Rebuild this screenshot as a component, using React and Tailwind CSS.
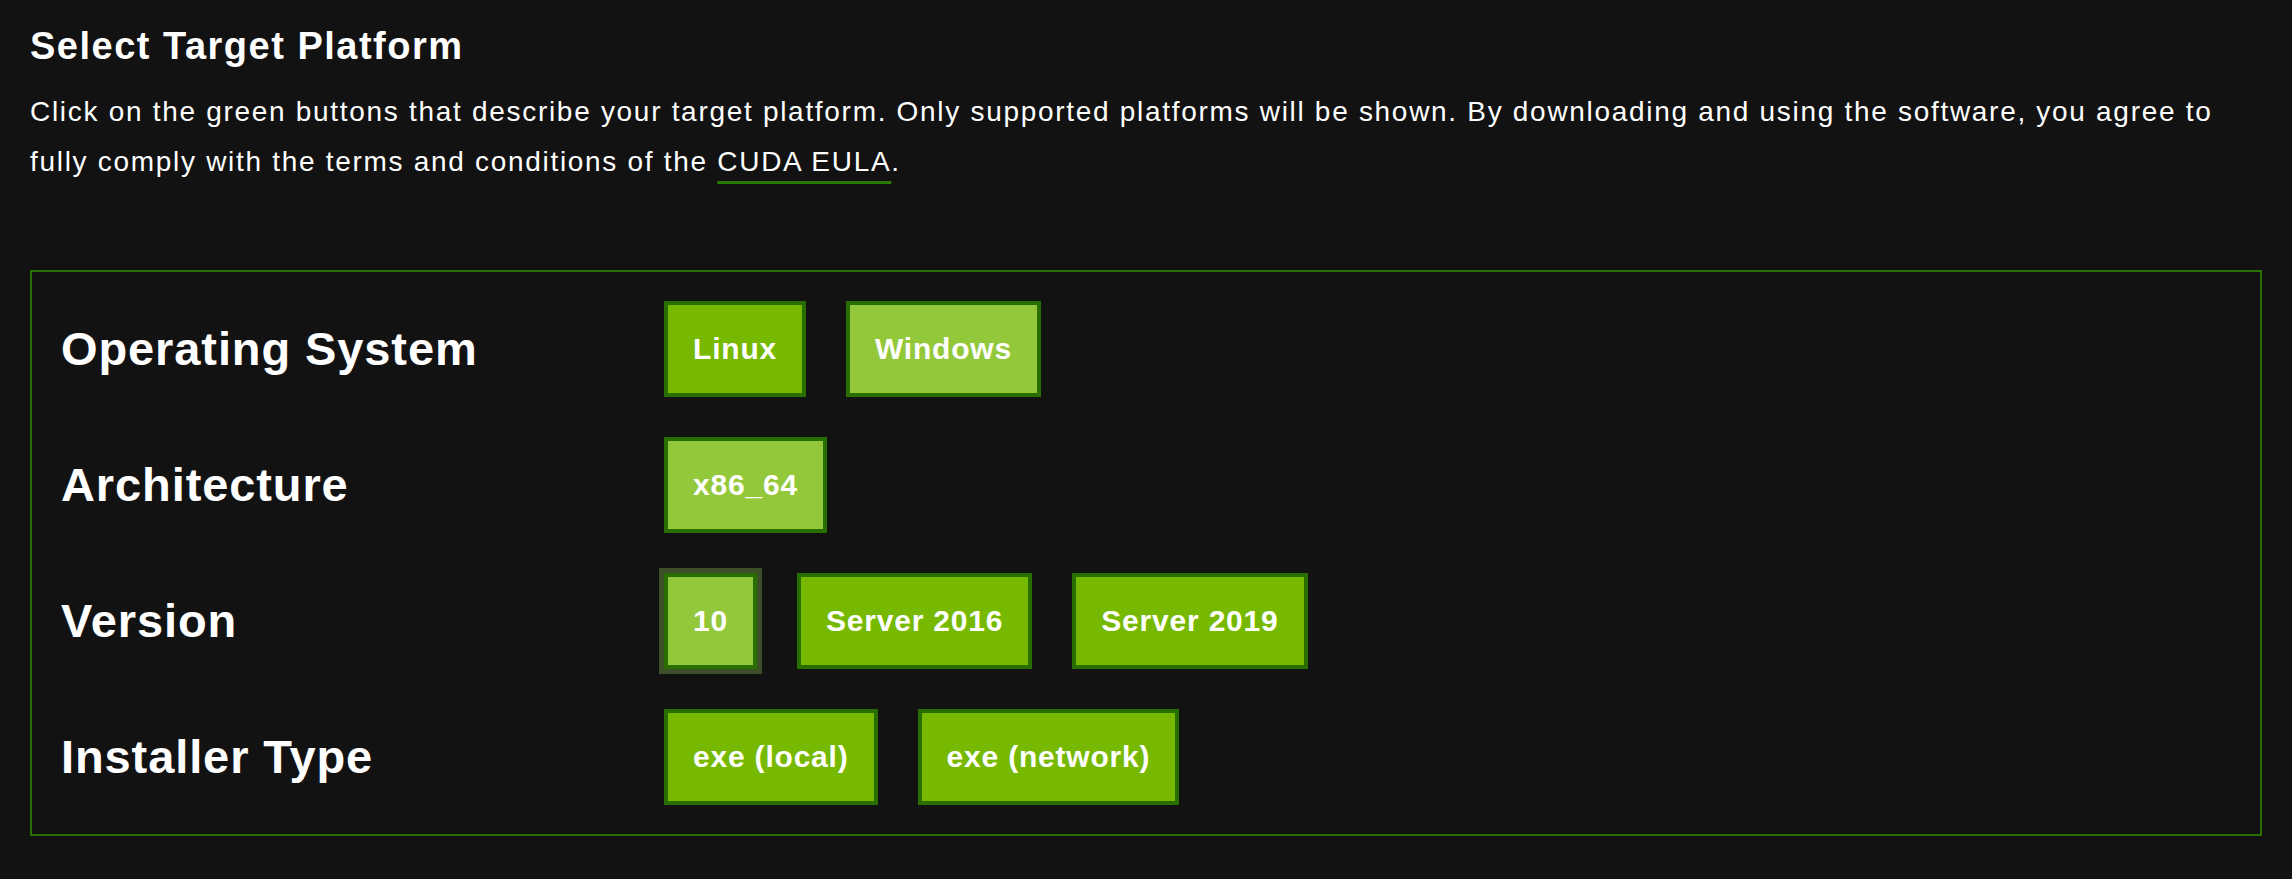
import React from 'react';

const rows = [
    { label: 'Operating System', options: [{ name: 'Linux' }, { name: 'Windows', active: true }] },
    { label: 'Architecture', options: [{ name: 'x86_64', active: true }] },
    { label: 'Version', options: [{ name: '10', active: true, focused: true }, { name: 'Server 2016' }, { name: 'Server 2019' }] },
    { label: 'Installer Type', options: [{ name: 'exe (local)' }, { name: 'exe (network)' }] },
];

function OptionButton({ name, active, focused }) {
    return (
        <button
            className={`h-[96px] px-[25px] border-4 border-[#286f00] text-white text-[30px] font-bold tracking-[0.8px] leading-none flex items-center ${active ? 'bg-[#93c83a]' : 'bg-[#76b900]'} ${focused ? 'shadow-[0_0_0_5px_#3d4f29]' : ''}`}
        >
            {name}
        </button>
    );
}

export default function App() {
    return (
        <div className="min-h-screen bg-[#121212] text-white px-[30px] pt-[24px] font-['Liberation_Sans',Arial,sans-serif]">
            <h2 className="text-[38px] leading-[1.2] font-bold tracking-[1.5px]">Select Target Platform</h2>
            <p className="mt-[17px] text-[28px] leading-[50px] tracking-[1.7px]">
                Click on the green buttons that describe your target platform. Only supported platforms will be shown. By downloading and using the software, you agree to fully comply with the terms and conditions of the{' '}
                <a className="underline decoration-[3px] underline-offset-[10px] decoration-[#2a7a00]">CUDA EULA</a>.
            </p>

            <div className="mt-[83px] border-2 border-[#2a7000] pl-[29px] py-[29px] flex flex-col gap-[40px]">
                {rows.map((row) => (
                    <div key={row.label} className="flex items-center">
                        <div className="w-[603px] shrink-0 text-[47px] font-bold tracking-[0.9px] leading-none">
                            {row.label}
                        </div>
                        <div className="flex gap-[40px]">
                            {row.options.map((opt) => (
                                <OptionButton key={opt.name} {...opt} />
                            ))}
                        </div>
                    </div>
                ))}
            </div>
        </div>
    );
}
